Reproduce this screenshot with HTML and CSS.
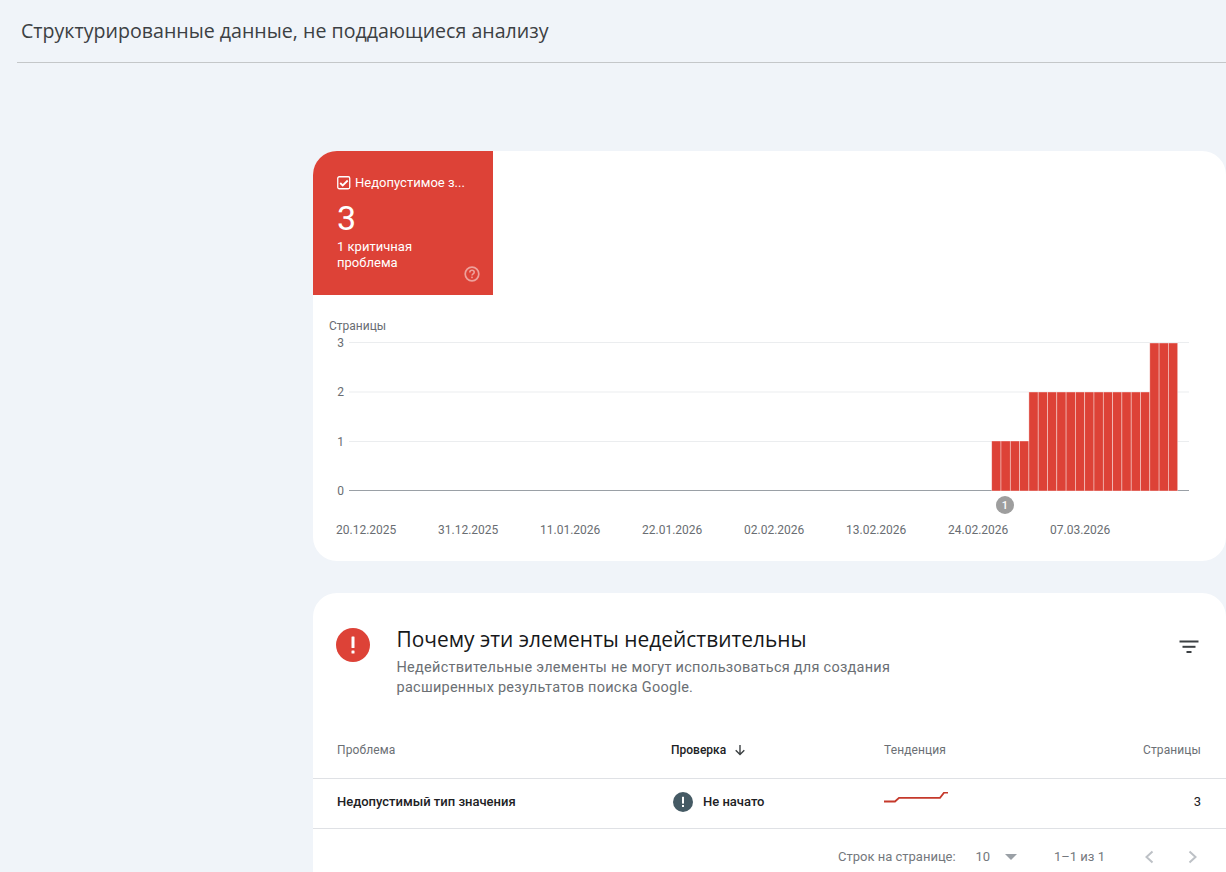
FILE: index.html
```html
<!DOCTYPE html>
<html lang="ru">
<head>
<meta charset="utf-8">
<title>Структурированные данные, не поддающиеся анализу</title>
<link rel="stylesheet" href="styles.css">
</head>
<body>
<header class="page-header">
  <h1 class="page-title">Структурированные данные, не поддающиеся анализу</h1>
</header>
<main class="content">
  <section class="card chart-card">
    <div class="tile">
      <div class="tile-head">
        <svg class="tile-check" viewBox="0 0 14 14" width="14" height="14"><rect x="0.750" y="0.750" width="12" height="12" rx="1.500" fill="none" stroke="#fff" stroke-width="1.300"/><path d="M3.200 7l2.500 2.500 5-5" fill="none" stroke="#fff" stroke-width="1.800"/></svg>
        <span class="tile-label">Недопустимое з...</span>
      </div>
      <div class="tile-value">3</div>
      <div class="tile-note">1 критичная<br>проблема</div>
      <svg class="tile-help" viewBox="0 0 16 16" width="16" height="16"><circle cx="8" cy="8" r="6.800" fill="none" stroke="#fff" stroke-opacity=".5" stroke-width="1.700"/><path d="M5.800 6.400c0-1.300 1-2.100 2.200-2.100s2.200.8 2.200 1.900c0 1.600-2.200 1.600-2.200 3.400" fill="none" stroke="#fff" stroke-opacity=".5" stroke-width="1.600"/><rect x="7.200" y="10.600" width="1.600" height="1.600" fill="#fff" fill-opacity=".5"/></svg>
    </div>
    <svg class="chart" viewBox="0 0 913 266" width="913" height="266">
      <text class="axis-title" x="16" y="35">Страницы</text>
      <g class="grid">
        <rect x="36" y="47" width="840" height="1"/>
        <rect x="36" y="96.500" width="840" height="1"/>
        <rect x="36" y="146" width="840" height="1"/>
      </g>
      <rect class="baseline" x="36" y="195" width="840" height="1"/>
      <g class="axis-y">
        <text x="31" y="52">3</text>
        <text x="31" y="101">2</text>
        <text x="31" y="151">1</text>
        <text x="31" y="200">0</text>
      </g>
      <g class="bars">
        <rect x="678.700" y="146" width="9.300" height="50"/>
        <rect x="688" y="146" width="9.300" height="50"/>
        <rect x="697.300" y="146" width="9.300" height="50"/>
        <rect x="706.600" y="146" width="9.300" height="50"/>
        <rect x="715.900" y="97" width="9.300" height="99"/>
        <rect x="725.200" y="97" width="9.300" height="99"/>
        <rect x="734.500" y="97" width="9.300" height="99"/>
        <rect x="743.800" y="97" width="9.300" height="99"/>
        <rect x="753.100" y="97" width="9.300" height="99"/>
        <rect x="762.400" y="97" width="9.300" height="99"/>
        <rect x="771.700" y="97" width="9.300" height="99"/>
        <rect x="781" y="97" width="9.300" height="99"/>
        <rect x="790.300" y="97" width="9.300" height="99"/>
        <rect x="799.600" y="97" width="9.300" height="99"/>
        <rect x="808.900" y="97" width="9.300" height="99"/>
        <rect x="818.200" y="97" width="9.300" height="99"/>
        <rect x="827.500" y="97" width="9.300" height="99"/>
        <rect x="836.800" y="48" width="9.300" height="148"/>
        <rect x="846.100" y="48" width="9.300" height="148"/>
        <rect x="855.400" y="48" width="9.300" height="148"/>
      </g>
      <circle class="marker" cx="692" cy="210" r="9"/>
      <text class="marker-text" x="692" y="214">1</text>
      <g class="axis-x">
        <text x="23" y="239">20.12.2025</text>
        <text x="125" y="239">31.12.2025</text>
        <text x="227" y="239">11.01.2026</text>
        <text x="329" y="239">22.01.2026</text>
        <text x="431" y="239">02.02.2026</text>
        <text x="533" y="239">13.02.2026</text>
        <text x="635" y="239">24.02.2026</text>
        <text x="737" y="239">07.03.2026</text>
      </g>
    </svg>
  </section>

  <section class="card issues-card">
    <div class="issues-head">
      <svg class="issues-icon" viewBox="0 0 34 34" width="34" height="34"><circle cx="17" cy="17" r="17" fill="#dd4237"/><rect x="15.500" y="8.500" width="3" height="11.500" rx="0.500" fill="#fff"/><rect x="15.500" y="22.500" width="3" height="3" rx="0.500" fill="#fff"/></svg>
      <div class="issues-text">
        <h2 class="issues-title">Почему эти элементы недействительны</h2>
        <p class="issues-sub">Недействительные элементы не могут использоваться для создания расширенных результатов поиска Google.</p>
      </div>
      <svg class="filter-icon" viewBox="0 0 20 14" width="20" height="14"><rect x="0.500" y="0.500" width="19" height="2" fill="#3c4043"/><rect x="3.500" y="5.800" width="13" height="2" fill="#3c4043"/><rect x="7.500" y="11" width="5" height="2" fill="#3c4043"/></svg>
    </div>
    <div class="row row-head">
      <div class="cell">Проблема</div>
      <div class="cell cell-sorted">Проверка
        <svg class="sort-icon" viewBox="0 0 12 12" width="12" height="12"><path d="M6 1v9.500M1.700 6.200L6 10.500l4.300-4.300" fill="none" stroke="#3c4043" stroke-width="1.400"/></svg>
      </div>
      <div class="cell">Тенденция</div>
      <div class="cell cell-num">Страницы</div>
    </div>
    <div class="row row-body">
      <div class="cell cell-name">Недопустимый тип значения</div>
      <div class="cell cell-status">
        <svg class="status-icon" viewBox="0 0 20 20" width="20" height="20"><circle cx="10" cy="10" r="10" fill="#455a64"/><rect x="9" y="4.800" width="2" height="6.800" fill="#fff"/><rect x="9" y="13" width="2" height="2" fill="#fff"/></svg>
        Не начато
      </div>
      <div class="cell">
        <svg class="trend" viewBox="0 0 64 12" width="64" height="12"><path d="M0 9.500h11l4-3.700h41l4-5.100h4" fill="none" stroke="#c5392b" stroke-width="1.800"/></svg>
      </div>
      <div class="cell cell-num cell-count">3</div>
    </div>
    <div class="pager">
      <span class="pager-label">Строк на странице:</span>
      <span class="pager-size">10</span>
      <span class="pager-caret"></span>
      <span class="pager-range">1–1 из 1</span>
      <svg class="pager-arrow" viewBox="0 0 12 16" width="12" height="16"><path d="M9.500 2.500L3.500 8l6 5.500" fill="none" stroke="#bdc1c6" stroke-width="2"/></svg>
      <svg class="pager-arrow pager-next" viewBox="0 0 12 16" width="12" height="16"><path d="M2.500 2.500L8.500 8l-6 5.500" fill="none" stroke="#bdc1c6" stroke-width="2"/></svg>
    </div>
  </section>
</main>
</body>
</html>
```
FILE: styles.css
```css
* { box-sizing: border-box; }
html, body { height: 100%; overflow: hidden; }
body {
  margin: 0;
  background: #f0f4f9;
  font-family: Roboto, "Liberation Sans", sans-serif;
  color: #202124;
}
.page-header {
  margin-left: 17px;
  height: 63px;
  padding: 18px 0 0 4px;
  border-bottom: 1px solid #c4c7c9;
}
.page-title {
  margin: 0;
  font-family: "Open Sans", Roboto, sans-serif;
  font-size: 19.600px;
  line-height: 26px;
  font-weight: 500;
  color: #3c4043;
}
.content {
  margin-left: 313px;
  padding-top: 88px;
  display: flex;
  flex-direction: column;
  gap: 32px;
}
.card {
  background: #fff;
  border-radius: 24px;
  overflow: hidden;
}
.chart-card { height: 410px; }
.tile {
  position: relative;
  width: 180px;
  height: 144px;
  padding: 23px 24px 0;
  background: #dd4237;
  color: #fff;
}
.tile-head { display: flex; align-items: center; gap: 4px; height: 17px; }
.tile-check { flex: none; }
.tile-label { font-size: 13px; font-weight: 400; letter-spacing: .02px; white-space: nowrap; }
.tile-value { margin-top: 8px; font-size: 34px; line-height: 38px; }
.tile-note { margin-top: 2px; font-size: 13px; font-weight: 400; letter-spacing: .02px; line-height: 16px; }
.tile-help { position: absolute; right: 13px; bottom: 13px; }
.chart { display: block; }
.chart text { font-family: Roboto, "Liberation Sans", sans-serif; font-size: 12px; fill: #696d72; }
.grid rect { fill: #ebedef; }
.baseline { fill: #9aa0a6; }
.axis-y text { text-anchor: end; }
.bars rect { fill: #dd4237; stroke: #fff; stroke-opacity: .55; stroke-width: 0.7; }
.marker { fill: #9e9e9e; }
.chart .marker-text { fill: #fff; font-size: 11px; font-weight: 500; text-anchor: middle; }
.issues-card { height: 340px; }
.issues-head {
  display: flex;
  align-items: flex-start;
  height: 136px;
  padding: 35px 27px 0 22.500px;
}
.issues-icon { flex: none; }
.issues-text { width: 520px; margin-left: 27px; }
.issues-title { margin: -1px 0 0; font-family: "Open Sans", Roboto, sans-serif; font-size: 20.900px; line-height: 24px; font-weight: 400; color: #16181a; }
.issues-sub { margin: 7px 0 0; font-size: 14.500px; line-height: 20px; color: #6b6f74; letter-spacing: .26px; }
.filter-icon { flex: none; margin: 12px 0 0 auto; }
.row {
  display: grid;
  grid-template-columns: 334px 213px 1fr auto;
  align-items: center;
  padding: 0 25px 0 24px;
  border-bottom: 1px solid #dfe1e5;
}
.row-head { height: 50px; padding-bottom: 8px; font-size: 12px; letter-spacing: .1px; color: #6b6f74; }
.row-body { height: 50px; padding-bottom: 4px; font-size: 13px; font-weight: 500; color: #202124; }
.cell-sorted { display: flex; align-items: center; gap: 8px; color: #202124; font-weight: 500; letter-spacing: 0; }
.cell-status { display: flex; align-items: center; gap: 10px; padding-left: 2px; }
.cell-num { text-align: right; }
.cell-count { font-weight: 400; }
.trend { display: block; margin-bottom: 7px; }
.pager {
  display: flex;
  align-items: center;
  height: 55px;
  padding-left: 525px;
  font-size: 13px;
  color: #74787d;
}
.pager-label { width: 137.500px; }
.pager-size { width: 29.500px; }
.pager-caret {
  width: 0; height: 0;
  border-left: 6px solid transparent;
  border-right: 6px solid transparent;
  border-top: 6px solid #9aa0a6;
}
.pager-range { margin-left: 37px; width: 89px; }
.pager-next { margin-left: 32px; }
```
